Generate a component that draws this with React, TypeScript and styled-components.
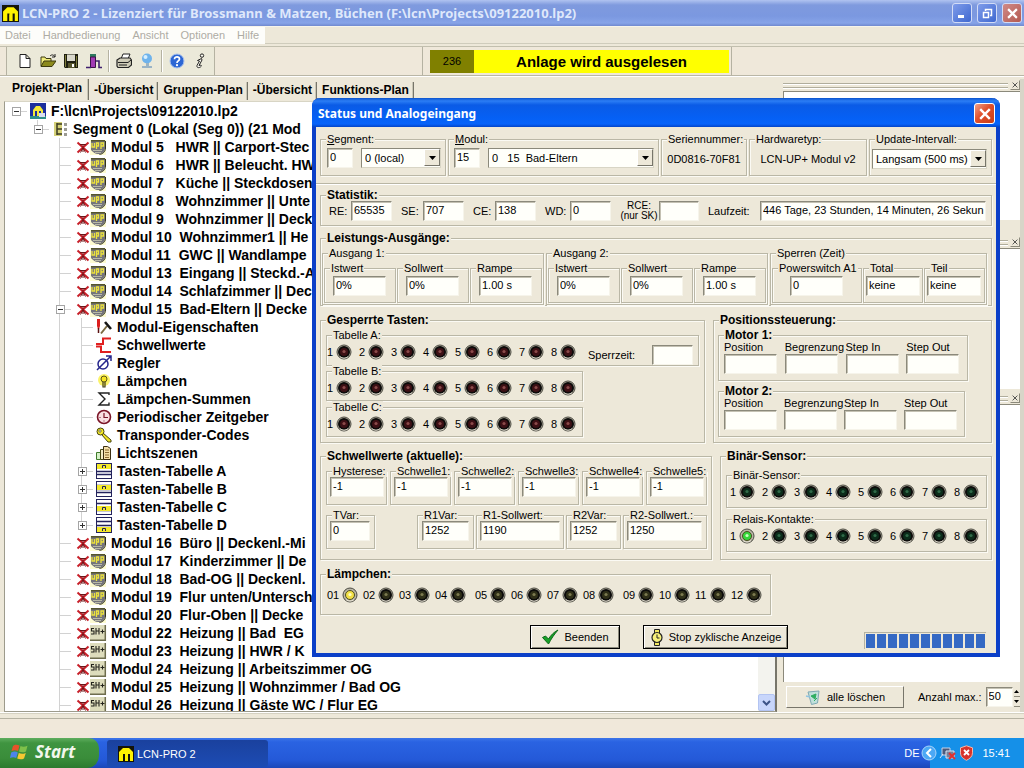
import React from "react";
import styled, { createGlobalStyle, css } from "styled-components";

const face = "#ede8d9";
const ui = '"Liberation Sans", Arial, sans-serif';
const caption = '"Noto Sans", "Open Sans", sans-serif';

const GlobalStyle = createGlobalStyle`
  *, *::before, *::after { box-sizing: border-box; }
  body { margin: 0; background: ${face}; color: #000; font: 11px/12px ${ui}; overflow: hidden; }
  button, input, select { font: inherit; color: inherit; margin: 0; }
  ul { list-style: none; margin: 0; padding: 0; }
  svg { display: block; flex: none; }
`;

const Desktop = styled.div`
  position: relative;
  display: flex;
  flex-direction: column;
  height: 100vh;
  min-height: 700px;
`;

/* ---------- main window frame ---------- */

const TitleBar = styled.header`
  display: flex;
  align-items: center;
  gap: 3px;
  height: 26px;
  padding: 0 2px;
  background: linear-gradient(#b0c3f0, #7f9ade 5px, #7b98e0 16px, #86a3e8 23px, #7089cf);
`;

const TitleText = styled.h1`
  flex: 1;
  margin: 0;
  color: #dfe8fb;
  font: bold 13px/18px ${caption};
  white-space: nowrap;
`;

const CaptionButton = styled.button<{ $danger?: boolean; $active?: boolean; $size?: number }>`
  display: grid;
  place-items: center;
  width: ${(p) => p.$size ?? 20}px;
  height: ${(p) => p.$size ?? 20}px;
  margin-left: 2px;
  padding: 0;
  border: 1px solid ${(p) => (p.$active ? "#fff" : "#d3dcf6")};
  border-radius: 3px;
  background: ${(p) =>
    p.$danger
      ? p.$active
        ? "linear-gradient(135deg, #f0a088, #e0502c 45%, #c83c14)"
        : "linear-gradient(135deg, #d08a88, #b45a50)"
      : "linear-gradient(135deg, #7f9cea, #3f68d0)"};
`;

const MenuBar = styled.nav`
  display: flex;
  height: 21px;
  border-top: 1px solid #f6f4ea;
  border-bottom: 1px solid #c2bfae;
  box-shadow: inset 0 -2px ${face}, inset 0 -3px #cfccbc;
`;

const MenuGroup = styled.div`
  display: flex;
  gap: 12px;
  height: 17px;
  padding: 0 6px 0 5px;
  background: #fdfdfa;
`;

const MenuItem = styled.button`
  padding: 0;
  border: 0;
  background: none;
  color: #aeaca4;
  line-height: 17px;
`;

const ToolRow = styled.div`
  display: flex;
  height: 29px;
  border-bottom: 1px solid #b9b6a6;
  background: #efe8da;
`;

const ToolBar = styled.div`
  display: flex;
  align-items: center;
  width: 209px;
  margin-left: 6px;
  padding-left: 6px;
  border-left: 1px solid #b5b2a2;
  border-right: 1px solid #b5b2a2;
  background: #ebe9d9;
`;

const ToolButton = styled.button`
  display: grid;
  place-items: center;
  width: 23px;
  height: 22px;
  padding: 0;
  border: 0;
  background: none;
`;

const ToolDivider = styled.span`
  width: 1px;
  height: 22px;
  margin: 0 3px;
  background: #b5b2a2;
  box-shadow: 1px 0 #fff;
`;

const Banner = styled.div`
  display: flex;
  margin-left: 207px;
  padding: 3px 2px 2px 7px;
  border-left: 1px solid #b5b2a2;
  border-right: 1px solid #b5b2a2;
`;

const BannerCount = styled.span`
  width: 44px;
  background: #808000;
  line-height: 23px;
  text-align: center;
`;

const BannerText = styled.strong`
  width: 255px;
  background: #ff0;
  font-size: 15px;
  line-height: 23px;
  text-align: center;
`;

const Workspace = styled.main`
  display: flex;
  flex: 1;
  min-height: 0;
  padding-top: 2px;
  border-top: 1px solid #fff;
`;

/* ---------- left column: tabs and tree ---------- */

const Explorer = styled.section`
  display: flex;
  flex: 1;
  flex-direction: column;
  min-width: 0;
  margin-left: 4px;
`;

const TabStrip = styled.div`
  display: flex;
  align-items: flex-end;
  height: 21px;
  padding-left: 2px;
`;

const Tab = styled.button<{ $selected?: boolean }>`
  height: ${(p) => (p.$selected ? 21 : 18)}px;
  padding: ${(p) => (p.$selected ? "0 6px 3px 6px" : "0 4px 1px 5px")};
  border: 0;
  border-right: 1px solid #77756a;
  box-shadow: inset -1px 0 #c9c6b6;
  background: none;
  font-weight: bold;
  font-size: 12px;
  line-height: 17px;
  white-space: nowrap;
`;

const TreePane = styled.div`
  display: flex;
  flex: 1;
  min-height: 0;
  margin-top: 1px;
  border: 1px solid #9d9b8c;
  border-top-color: #d8d5c5;
  border-right: 2px solid #77756a;
  background: #fff;
`;

const Tree = styled.ul`
  flex: 1;
  min-width: 0;
  overflow: hidden;
`;

const TreeRow = styled.li`
  display: flex;
  align-items: center;
  height: 18px;
  font-weight: bold;
  font-size: 14px;
  line-height: 18px;
  white-space: pre;
`;

const Gutter = styled.span<{ $line?: "full" | "half" | "none"; $tick?: boolean }>`
  display: grid;
  flex: none;
  place-items: center;
  width: 22px;
  height: 18px;
  background:
    ${(p) =>
      p.$line === "full"
        ? "linear-gradient(#d2d2d2, #d2d2d2) 10px 0 / 1px 18px no-repeat,"
        : p.$line === "half"
          ? "linear-gradient(#d2d2d2, #d2d2d2) 10px 0 / 1px 9px no-repeat,"
          : ""}
    ${(p) =>
      p.$tick
        ? "linear-gradient(#d2d2d2, #d2d2d2) 11px 9px / 11px 1px no-repeat,"
        : ""}
    transparent;
`;

const Toggle = styled.button`
  display: grid;
  place-items: center;
  width: 9px;
  height: 9px;
  padding: 0;
  border: 1px solid #a5a5a5;
  background: #fff;
`;

const IconCell = styled.span<{ $wide?: boolean }>`
  display: flex;
  flex: none;
  align-items: center;
  justify-content: center;
  width: ${(p) => (p.$wide ? 38 : 22)}px;
  margin-right: 2px;
  padding-left: ${(p) => (p.$wide ? 3 : 0)}px;
`;

const ScrollTrack = styled.div`
  display: flex;
  flex-direction: column;
  justify-content: flex-end;
  width: 17px;
  background: #f3f3ee;
`;

const ScrollButton = styled.button`
  display: grid;
  place-items: center;
  height: 17px;
  padding: 0;
  border: 1px solid #b3c4f2;
  border-radius: 2px;
  background: #c8d6fb;
`;

/* ---------- right column ---------- */

const SideColumn = styled.aside`
  display: flex;
  flex-direction: column;
  width: 241px;
  margin-left: 6px;
  border-right: 4px solid #d8d5c8;
`;

const Grip = styled.div<{ $mt?: number }>`
  display: flex;
  align-items: center;
  gap: 2px;
  height: 12px;
  margin-top: ${(p) => p.$mt ?? 0}px;
`;

const GripLines = styled.span`
  flex: 1;
  height: 5px;
  border-top: 1px solid #b0ad9c;
  border-bottom: 1px solid #b0ad9c;
  box-shadow: inset 0 1px #fff, 0 1px #fff;
`;

const GripClose = styled.button`
  display: grid;
  place-items: center;
  width: 10px;
  height: 10px;
  padding: 0;
  border: 1px solid;
  border-color: ${face} #8b897b #8b897b ${face};
  background: ${face};
`;

const SidePane = styled.div<{ $height?: number }>`
  ${(p) => (p.$height ? css`height: ${p.$height}px;` : css`flex: 1;`)}
  border-top: 1px solid #8b897b;
  border-left: 1px solid #8b897b;
  background: #fff;
`;

const SideFooter = styled.div`
  display: flex;
  align-items: center;
  height: 30px;
  padding-left: 3px;
  white-space: nowrap;
`;

const ClearButton = styled.button`
  display: flex;
  flex: none;
  align-items: center;
  justify-content: center;
  gap: 6px;
  width: 118px;
  height: 22px;
  margin-right: 14px;
  padding: 0;
  border: 1px solid;
  border-color: #fff #77756a #77756a #fff;
  background: ${face};
`;

const Spinner = styled.span`
  display: grid;
  width: 11px;
  margin-left: 1px;
`;

const SpinButton = styled.button`
  display: grid;
  place-items: center;
  height: 10px;
  padding: 0;
  border: 0;
  border-bottom: 1px solid #8b897b;
  background: ${face};
`;

/* ---------- bottom ---------- */

const StatusBar = styled.footer`
  height: 26px;
  border-top: 1px solid #fff;
  background: linear-gradient(#d5d2c2 1px, ${face} 1px 5px, #b5b2a2 5px 6px, #f0e8da 6px);
`;

const TaskBar = styled.nav`
  display: flex;
  height: 30px;
  background: linear-gradient(#3c74e8, #2a63e2 4px, #2459d8 22px, #1c47b8);
  color: #fff;
`;

const StartButton = styled.button`
  display: flex;
  align-items: center;
  gap: 5px;
  width: 99px;
  padding: 0 0 2px 10px;
  border: 0;
  border-radius: 0 10px 12px 0;
  background: linear-gradient(#5fae5f, #3f9440 5px, #3a8d3a 20px, #2c7a2e);
  color: #f2f7ec;
  font: italic bold 17px/22px ${caption};
`;

const TaskButton = styled.button`
  display: flex;
  align-items: center;
  gap: 3px;
  width: 161px;
  height: 27px;
  margin: 2px 0 0 8px;
  padding: 0 0 0 11px;
  border: 0;
  border-radius: 3px;
  background: linear-gradient(#1a419e, #1d4cb4);
`;

const Tray = styled.div`
  display: flex;
  align-items: center;
  gap: 2px;
  margin-left: auto;
  padding: 0 14px 0 11px;
  background: linear-gradient(90deg, transparent 37px, #1590e8 37px);
`;

const Clock = styled.time`
  margin-left: 6px;
`;

/* ---------- dialog ---------- */

const Dialog = styled.section`
  position: absolute;
  top: 98px;
  right: 24px;
  left: 312px;
  min-width: 688px;
  border: 4px solid #0b3fc8;
  border-top: 0;
  border-radius: 8px 8px 0 0;
  background: ${face};
`;

const DialogTitle = styled.header`
  display: flex;
  align-items: center;
  justify-content: space-between;
  height: 29px;
  margin: 0 -4px;
  padding: 2px 5px 0 6px;
  border-radius: 8px 8px 0 0;
  background: linear-gradient(#0a52cc, #2b7df5 3px, #0a5be6 7px, #0560f5 20px, #0763fa 26px, #0344c8);
`;

const DialogCaption = styled.h2`
  margin: 0;
  color: #fff;
  font: bold 12px/18px ${caption};
`;

const DialogBody = styled.form`
  display: flex;
  flex-direction: column;
  padding: 6px 4px 4px;
`;

const Bar = styled.div<{ $gap?: number; $mt?: number; $grow?: boolean }>`
  display: flex;
  flex: ${(p) => (p.$grow ? "1" : "none")};
  gap: ${(p) => p.$gap ?? 2}px;
  min-width: 0;
  margin-top: ${(p) => p.$mt ?? 0}px;
`;

const Rule = styled.hr`
  height: 2px;
  margin: 7px -4px 4px;
  border: 0;
  border-top: 1px solid #b9b6a4;
  background: #fff;
`;

type GroupProps = {
  $w?: number;
  $h: number;
  $mt?: number;
  $ml?: number;
  $pt?: number;
  $pr?: number;
  $pl?: number;
  $stack?: boolean;
};

const Group = styled.fieldset<GroupProps>`
  --inset: ${(p) => p.$pl ?? 0}px;
  display: flex;
  flex: ${(p) => (p.$w ? `0 0 ${p.$w}px` : "1 1 0")};
  ${(p) => p.$stack && css`flex: none; width: ${p.$w ? `${p.$w}px` : "auto"};`}
  height: ${(p) => p.$h}px;
  min-width: 0;
  margin: ${(p) => p.$mt ?? 0}px 0 0 ${(p) => p.$ml ?? 0}px;
  padding: ${(p) => p.$pt ?? 0}px ${(p) => p.$pr ?? 0}px 0 var(--inset);
  border: 1px solid #bab7a6;
  box-shadow: 1px 1px #fbfaf4, inset 1px 1px #fbfaf4;
`;

const Legend = styled.legend<{ $bold?: boolean }>`
  height: 12px;
  margin-left: calc(5px - var(--inset));
  padding: 0 1px;
  background: ${face};
  font-weight: ${(p) => (p.$bold ? "bold" : "normal")};
  font-size: ${(p) => (p.$bold ? 12 : 11)}px;
  line-height: 12px;
  white-space: nowrap;
`;

const TextBox = styled.input<{ $w?: number }>`
  ${(p) => (p.$w ? css`flex: none; width: ${p.$w}px;` : css`flex: 1; width: 0;`)}
  height: 20px;
  padding: 0 0 3px 2px;
  border: 1px solid;
  border-color: #8b897b #f6f4ea #f6f4ea #8b897b;
  box-shadow: inset 1px 1px #c4c1b3;
  border-radius: 0;
  background: #fffffa;
  outline: 0;
`;

const Combo = styled.span<{ $w?: number; $ml?: number }>`
  display: grid;
  ${(p) => (p.$w ? css`flex: none; width: ${p.$w}px;` : css`flex: 1;`)}
  height: 20px;
  margin-left: ${(p) => p.$ml ?? 0}px;
  border: 1px solid;
  border-color: #8b897b #d8d5c5 #d8d5c5 #8b897b;
  background: #fffffa;

  select, span { grid-area: 1 / 1; }
  select {
    appearance: none;
    width: 100%;
    height: 18px;
    padding: 0 16px 0 3px;
    border: 0;
    background: none;
    outline: 0;
  }
`;

const ComboArrow = styled.span`
  display: grid;
  place-items: center;
  justify-self: end;
  width: 16px;
  height: 17px;
  border: 1px solid;
  border-color: #fff #77756a #77756a #fff;
  background: ${face};
  pointer-events: none;
`;

const Field = styled.label<{ $gap?: number; $ml?: number; $grow?: boolean }>`
  display: flex;
  flex: ${(p) => (p.$grow ? "1" : "none")};
  align-items: center;
  gap: ${(p) => p.$gap ?? 4}px;
  min-width: 0;
  margin-left: ${(p) => p.$ml ?? 0}px;
`;

const FieldName = styled.span<{ $w: number; $small?: boolean }>`
  width: ${(p) => p.$w}px;
  ${(p) => p.$small && css`font-size: 10px; line-height: 10px; text-align: center; white-space: nowrap;`}
`;

const Readout = styled.output`
  flex: 1;
  line-height: 22px;
  text-align: center;
`;

const Stack = styled.div`
  flex: 1;
  min-width: 0;
`;

const LampRow = styled.div`
  display: flex;
`;

const LampCell = styled.span<{ $w: number; $label: number; $space?: boolean }>`
  display: grid;
  grid-template-columns: ${(p) => p.$label}px 16px;
  align-items: center;
  width: ${(p) => p.$w}px;
  height: 16px;
  margin-left: ${(p) => (p.$space ? 4 : 0)}px;
`;

const MotorGrid = styled.div`
  display: grid;
  flex: 1;
  grid-template-columns: repeat(4, 1fr);
  align-content: start;
`;

const MotorField = styled.label`
  display: flex;
  flex-direction: column;
  gap: 1px;
  white-space: nowrap;
`;

const ActionBar = styled.div`
  display: flex;
  align-items: flex-start;
  margin: 10px 6px 0 210px;
`;

const ActionButton = styled.button<{ $w: number }>`
  display: flex;
  align-items: center;
  justify-content: center;
  gap: 5px;
  width: ${(p) => p.$w}px;
  height: 24px;
  margin-right: 23px;
  padding: 0;
  border: 1px solid #000;
  box-shadow: inset 1px 1px #fff, inset -1px -1px #8b897b;
  background: ${face};
  white-space: nowrap;
`;

const Progress = styled.div`
  display: flex;
  gap: 2px;
  height: 17px;
  margin: 7px 0 0 auto;
  padding: 1px;
  border-top: 1px solid #b5b2a2;
  border-left: 1px solid #b5b2a2;
`;

const ProgressChunk = styled.span`
  width: 9px;
  background: #3569c4;
`;

/* ---------- drawings ---------- */

const lampColors = {
  red: ["#3d1015", "#8c4a4a"],
  green: ["#0b2c1a", "#2f6a48"],
  amber: ["#2f2f18", "#7c7a50"],
  greenOn: ["#35d63a", "#c9ffc0"],
  amberOn: ["#f2e045", "#fffbc0"],
};
type LampColor = keyof typeof lampColors;

const Lamp = ({ color }: { color: LampColor }) => {
  const [core, glint] = lampColors[color];
  const on = color.endsWith("On");
  return (
    <svg width="16" height="16" viewBox="0 0 16 16" aria-hidden="true">
      <circle cx="8" cy="8" r="7" fill="#b9b5a5" stroke="#4b4a42" />
      <circle cx="8" cy="8" r={on ? 4.5 : 5} fill={core} stroke={on ? "#4d4c22" : "#0c0b0a"} strokeWidth={on ? 1 : 2} />
      <circle cx="8" cy="7.5" r="1.6" fill={glint} />
      <path d="M4 12.6a6 6 0 0 0 8 0" fill="none" stroke="#f7f3e6" strokeWidth=".8" />
    </svg>
  );
};

const AppIcon = ({ size = 17 }: { size?: number }) => (
  <svg width={size} height={size} viewBox="0 0 16 16" aria-hidden="true">
    <rect width="16" height="16" fill="#14140a" />
    <path d="M1 15V6l4-4h6l4 4v9h-3V8h-2v7H7V8H5v7z" fill="#fff200" />
    <path d="M7 9h1v6H7z" fill="#fff200" />
  </svg>
);

const Cross = ({ size = 11, color = "#fff", width = 2 }: { size?: number; color?: string; width?: number }) => (
  <svg width={size} height={size} viewBox="0 0 10 10" aria-hidden="true">
    <path d="M1 1l8 8M9 1L1 9" stroke={color} strokeWidth={width} />
  </svg>
);

const DeadMark = () => (
  <svg width="14" height="16" viewBox="0 0 14 16" aria-hidden="true">
    <path d="M1.500 3.500l11 10M12.500 3.500l-11 10" stroke="#c8202a" strokeWidth="2" />
    <path d="M7 5v8M4 5.500h6M4.500 13.500L7 9l2.500 4.500" fill="none" stroke="#6e1518" />
  </svg>
);

const UppIcon = () => (
  <svg width="17" height="17" viewBox="0 0 17 17" aria-hidden="true">
    <path d="M0 1h16v15H0z" fill="#fdfbd0" />
    <path d="M1 1h14v8c0 4-3 6-7 6-3 0-5-2-7-4z" fill="#74747c" />
    <path d="M1 1h14v1.500H1z" fill="#55552c" />
    <path d="M2 4v4h2.500V4M6.500 10V4h2v3h-2M11 10V4h2.500v3H11" fill="none" stroke="#ece23c" strokeWidth="1.300" />
    <path d="M3 11.500h9M5 13.500h6" stroke="#b9b9a6" />
    <path d="M15.500 2v7c0 4-3 6-6 6.500" fill="none" stroke="#33331c" />
  </svg>
);

const ShIcon = () => (
  <svg width="17" height="17" viewBox="0 0 17 17" aria-hidden="true">
    <rect width="16" height="16" fill="#dddcbc" />
    <path d="M15.300 0v15.300H0" fill="none" stroke="#6e6d4e" strokeWidth="1.500" />
    <path d="M4 3.500H1.500V6H4v3H1M6 3v6.500M9 3v6.500M6 6h3M10.500 6.500h4M12.500 4.500v4" fill="none" stroke="#23231c" strokeWidth="1.100" />
  </svg>
);

const treeIcons: Record<string, React.ReactNode> = {
  project: (
    <>
      <rect width="16" height="16" fill="#1c2f9e" />
      <path d="M0 13h16v3H0z" fill="#2f8f8a" />
      <path d="M3 13V7l3-4h4l3 4v6h-2V8H9v5H7V8H5v5z" fill="#f4e93a" />
      <path d="M9 10h6v4H9z" fill="#d9dff0" />
    </>
  ),
  segment: (
    <>
      <path d="M2 1h8v14H2z" fill="#d6d27a" />
      <path d="M5 2v12M5 3h5M5 8h5M5 13h5" fill="none" stroke="#3b3b22" strokeWidth="1.500" />
      <path d="M12 2h3v3h-3zM12 7h3v3h-3zM12 12h3v3h-3z" fill="#9b9b92" />
    </>
  ),
  tools: (
    <>
      <path d="M1 0h3v7l-1 3H2L1 7z" fill="#dc1f1f" />
      <path d="M2.500 9v5" stroke="#5b1212" strokeWidth="1.500" />
      <path d="M5 14.500L11 7" stroke="#7a6a40" strokeWidth="2" />
      <path d="M9 3l6 7" stroke="#161616" strokeWidth="2.600" />
    </>
  ),
  threshold: <path d="M15 1.500H7V7H0M0 9.500h5V15h10" fill="none" stroke="#e02020" strokeWidth="2" />,
  control: (
    <>
      <circle cx="7" cy="9" r="5" fill="none" stroke="#26268c" strokeWidth="1.500" />
      <path d="M1 15L15 1M10 1h5v5" fill="none" stroke="#26268c" strokeWidth="1.500" />
    </>
  ),
  bulb: (
    <>
      <circle cx="8" cy="7" r="6" fill="#fbf36a" />
      <circle cx="8" cy="6" r="3" fill="#f7e420" stroke="#5a5416" />
      <path d="M7 9v5h2V9" fill="none" stroke="#3e3a12" strokeWidth="1.200" />
    </>
  ),
  sum: <path d="M13 4V2H3l6 6-6 6h10v-2.500" fill="none" stroke="#222" strokeWidth="1.400" />,
  clock: (
    <>
      <circle cx="8" cy="8" r="6.500" fill="#f9dfe2" stroke="#7a1426" strokeWidth="1.600" />
      <path d="M8 4v4.500h4" fill="none" stroke="#7a1426" strokeWidth="1.200" />
      <path d="M3.500 8.500h1M8 12.500v-1" stroke="#7a1426" />
    </>
  ),
  key: (
    <>
      <path d="M7 6l8 7v2h-3l-6-7" fill="#f0e224" stroke="#45420f" />
      <circle cx="4.500" cy="4.500" r="3.500" fill="#f6ea2c" stroke="#45420f" />
      <circle cx="4" cy="4" r="1.200" fill="#fff" stroke="#45420f" strokeWidth=".7" />
    </>
  ),
  scenes: (
    <>
      <path d="M.500 7.500h4v7h-4z" fill="#d6f0c8" stroke="#3e7a2a" />
      <path d="M4.500 4.500h5v10h-5z" fill="#f4ecc8" stroke="#4a4a16" />
      <path d="M7.500 1.500h4l3 2v11h-7z" fill="#f4dfa8" stroke="#3c2d10" />
      <path d="M9 5h4M9 7.500h4M9 10h4M9 12.500h4" stroke="#8a6a32" />
    </>
  ),
};

const TreeIcon = ({ name }: { name: string }) => {
  const band = { tabA: 0, tabB: 1, tabC: 2, tabD: 3 }[name];
  return (
    <svg width="16" height="16" viewBox="0 0 16 16" aria-hidden="true">
      {band === undefined ? (
        treeIcons[name]
      ) : (
        <>
          <rect x=".5" y=".5" width="15" height="15" fill="#fff" stroke="#23235c" />
          <path d="M1 4.500h14M1 8.500h14M1 11.500h14" stroke="#23235c" strokeWidth="1.400" />
          <rect x="1" y={1 + band * 3} width="14" height="5" fill="#f5ea2a" />
          <path d={`M6.500 ${5 + band * 3}v-2.500h3v2.500`} fill="none" stroke="#23235c" />
        </>
      )}
    </svg>
  );
};

const toolIcons: Record<string, React.ReactNode> = {
  Neu: <path d="M3 1.500h6l4 4v9H3zM9 1.500v4h4" fill="#fff" stroke="#222" />,
  Öffnen: (
    <>
      <path d="M1 13V4h4l1 1.500h5V8" fill="#f0ec7a" stroke="#3c3a10" />
      <path d="M1 13.500L4 8h12l-4 5.500z" fill="#8c8a1c" stroke="#3c3a10" />
      <path d="M10 3c2-2 4-1 5 1M15 1v3h-3" fill="none" stroke="#222" />
    </>
  ),
  Speichern: (
    <>
      <path d="M1 1h14v14H2l-1-1z" fill="#1e1e10" />
      <path d="M2 2h1v12H2zM13 3h1v11h-1z" fill="#7d7c3c" />
      <path d="M4 1.500h8V8H4z" fill="#d9d8cc" />
      <path d="M5 10h7v5H5z" fill="#55542c" />
      <path d="M9 11h2v3H9z" fill="#fff" />
    </>
  ),
  Beenden: (
    <>
      <path d="M4 1h6v3H4z" fill="#2f7a5e" />
      <path d="M4.500 4h5v10.500h-5z" fill="#a23ab4" stroke="#3a1246" />
      <path d="M0 14.500h5M10 8h3v6.500h3" fill="none" stroke="#3f1f6e" strokeWidth="1.600" />
    </>
  ),
  Drucken: (
    <>
      <path d="M5 6l2-5h7l-2 5" fill="#fff" stroke="#222" />
      <path d="M1 7l3-2h10l1.500 2v5l-3 2.500H2L1 13z" fill="#cfccb8" stroke="#222" strokeWidth="1.200" />
      <path d="M2 9.500h10M3 12h8M12 9.500L15 7" stroke="#222" />
    </>
  ),
  Netz: (
    <>
      <circle cx="8" cy="5.500" r="5" fill="#6fb3ec" />
      <circle cx="6.500" cy="4" r="2" fill="#d6efff" />
      <path d="M7 10h3v3H7zM3 13h10v2H3z" fill="#9ab4c6" />
    </>
  ),
  Hilfe: (
    <>
      <circle cx="8" cy="8" r="7" fill="#2c66d4" stroke="#a9c2ee" />
      <path d="M5.500 6.200C5.500 3 10.800 3.200 10.500 6.200 10.300 8 8 8 8 10" fill="none" stroke="#fff" strokeWidth="1.700" />
      <circle cx="8" cy="12.200" r="1.100" fill="#fff" />
    </>
  ),
  Info: (
    <>
      <path d="M9.500 5.500L5.500 7.500l2 .5L5 12.500c-.5 3 3 2.500 4.500.5L8.500 12l-1.500.5L10 7z" fill="#fbfaf0" stroke="#222" />
      <circle cx="10" cy="2.600" r="1.700" fill="#fbfaf0" stroke="#222" />
    </>
  ),
};

const ToolGlyph = ({ name }: { name: string }) => (
  <svg width="16" height="16" viewBox="0 0 16 16" aria-hidden="true">
    {toolIcons[name]}
  </svg>
);

const CheckIcon = () => (
  <svg width="18" height="16" viewBox="0 0 18 16" aria-hidden="true">
    <path d="M1.500 8.500L4.500 7l3 3C10 6 13 3 17 1 13.500 5 10 10 7.500 15z" fill="#18a028" stroke="#0c6a18" />
  </svg>
);

const WatchIcon = () => (
  <svg width="14" height="17" viewBox="0 0 14 17" aria-hidden="true">
    <path d="M4.500.5h5v4h-5zM4.500 12.500h5v4h-5z" fill="#f2e860" stroke="#222" />
    <circle cx="7" cy="8.500" r="5" fill="#f7f07a" stroke="#222" strokeWidth="1.200" />
    <path d="M7 5.500v3.500h2.500" fill="none" stroke="#222" />
  </svg>
);

const BinIcon = () => (
  <svg width="16" height="16" viewBox="0 0 16 16" aria-hidden="true">
    <path d="M3 3l11-1-1.500 12-6 1.500z" fill="#bfe0da" stroke="#7fa8b4" />
    <path d="M6 7l5-2-1 5zM9 12l3-3" fill="#2fae62" stroke="#2fae62" />
    <path d="M1 7l4 1" stroke="#8fc4e0" strokeWidth="1.500" />
  </svg>
);

const FlagIcon = () => (
  <svg width="20" height="18" viewBox="0 0 20 18" aria-hidden="true">
    <path d="M3 3c2-2 4-1.500 6.500-.5L8 8C6 7 4 7 1.500 8z" fill="#e8532a" />
    <path d="M10.500 3c2 1 4 1.200 7-.3L16 8.500c-2.500 1.200-4.500 1-7 0z" fill="#7fc04a" />
    <path d="M1.200 9.500C4 8 6 8.500 7.800 9.500L6.200 15C4 14 2.500 14 0 15z" fill="#4d84ea" />
    <path d="M8.800 10c2.200 1 4 1.200 7 0L14 15.500c-2.500 1.200-4.500 1-6.800 0z" fill="#f6c832" />
  </svg>
);

/* ---------- data ---------- */

type TreeNode = { text: string; kind: "upp" | "sh" | "child"; icon?: string; open?: boolean; expandable?: boolean };

const nodes: TreeNode[] = [
  { kind: "upp", text: "Modul 5   HWR || Carport-Stec" },
  { kind: "upp", text: "Modul 6   HWR || Beleucht. HW" },
  { kind: "upp", text: "Modul 7   Küche || Steckdosen" },
  { kind: "upp", text: "Modul 8   Wohnzimmer || Unte" },
  { kind: "upp", text: "Modul 9   Wohnzimmer || Deck" },
  { kind: "upp", text: "Modul 10  Wohnzimmer1 || He" },
  { kind: "upp", text: "Modul 11  GWC || Wandlampe" },
  { kind: "upp", text: "Modul 13  Eingang || Steckd.-A" },
  { kind: "upp", text: "Modul 14  Schlafzimmer || Dec" },
  { kind: "upp", text: "Modul 15  Bad-Eltern || Decke", open: true },
  { kind: "child", text: "Modul-Eigenschaften", icon: "tools" },
  { kind: "child", text: "Schwellwerte", icon: "threshold" },
  { kind: "child", text: "Regler", icon: "control" },
  { kind: "child", text: "Lämpchen", icon: "bulb" },
  { kind: "child", text: "Lämpchen-Summen", icon: "sum" },
  { kind: "child", text: "Periodischer Zeitgeber", icon: "clock" },
  { kind: "child", text: "Transponder-Codes", icon: "key" },
  { kind: "child", text: "Lichtszenen", icon: "scenes" },
  { kind: "child", text: "Tasten-Tabelle A", icon: "tabA", expandable: true },
  { kind: "child", text: "Tasten-Tabelle B", icon: "tabB", expandable: true },
  { kind: "child", text: "Tasten-Tabelle C", icon: "tabC", expandable: true },
  { kind: "child", text: "Tasten-Tabelle D", icon: "tabD", expandable: true },
  { kind: "upp", text: "Modul 16  Büro || Deckenl.-Mi" },
  { kind: "upp", text: "Modul 17  Kinderzimmer || De" },
  { kind: "upp", text: "Modul 18  Bad-OG || Deckenl." },
  { kind: "upp", text: "Modul 19  Flur unten/Untersch" },
  { kind: "upp", text: "Modul 20  Flur-Oben || Decke" },
  { kind: "sh", text: "Modul 22  Heizung || Bad  EG" },
  { kind: "sh", text: "Modul 23  Heizung || HWR / K" },
  { kind: "sh", text: "Modul 24  Heizung || Arbeitszimmer OG" },
  { kind: "sh", text: "Modul 25  Heizung || Wohnzimmer / Bad OG" },
  { kind: "sh", text: "Modul 26  Heizung || Gäste WC / Flur EG" },
];

const Expander = ({ open, name }: { open?: boolean; name: string }) => (
  <Toggle type="button" aria-label={name} aria-expanded={!!open}>
    <svg width="7" height="7" viewBox="0 0 7 7" aria-hidden="true">
      <path d={open ? "M1 3.500h5" : "M1 3.500h5M3.500 1v5"} stroke="#333" />
    </svg>
  </Toggle>
);

const NodeRow = ({ node }: { node: TreeNode }) => {
  const child = node.kind === "child";
  return (
    <TreeRow>
      <Gutter />
      <Gutter />
      <Gutter $line="full" $tick={!child}>
        {node.open && <Expander open name={node.text} />}
      </Gutter>
      {child && (
        <Gutter $line={node.icon === "tabD" ? "half" : "full"} $tick>
          {node.expandable && <Expander name={node.text} />}
        </Gutter>
      )}
      <IconCell $wide={!child}>
        {child ? (
          <TreeIcon name={node.icon!} />
        ) : (
          <>
            <DeadMark />
            {node.kind === "upp" ? <UppIcon /> : <ShIcon />}
          </>
        )}
      </IconCell>
      {node.text}
    </TreeRow>
  );
};

/* ---------- dialog parts ---------- */

const Lamps = ({ color, on = [] }: { color: "red" | "green"; on?: number[] }) => (
  <LampRow>
    {[1, 2, 3, 4, 5, 6, 7, 8].map((n) => (
      <LampCell key={n} $w={32} $label={9}>
        {n}
        <Lamp color={on.includes(n) ? "greenOn" : color} />
      </LampCell>
    ))}
  </LampRow>
);

type ValueBoxProps = { name: string; value: string; w: number; box?: number; h?: number; pt?: number; pl?: number; ml?: number };

const ValueBox = ({ name, value, w, box, h = 41, pt = 2, pl = 8, ml }: ValueBoxProps) => (
  <Group $w={box} $h={h} $pt={pt} $pl={pl} $ml={ml}>
    <Legend>{name}</Legend>
    <TextBox $w={w} defaultValue={value} aria-label={name} />
  </Group>
);

const Motor = ({ name, w, mt }: { name: string; w: number; mt?: number }) => (
  <Group $stack $w={w} $h={52} $mt={mt} $pl={5}>
    <Legend $bold>{name}</Legend>
    <MotorGrid>
      {["Position", "Begrenzung", "Step In", "Step Out"].map((f) => (
        <MotorField key={f}>
          {f}
          <TextBox $w={53} />
        </MotorField>
      ))}
    </MotorGrid>
  </Group>
);

const Arrow = () => (
  <ComboArrow>
    <svg width="7" height="4" viewBox="0 0 7 4" aria-hidden="true">
      <path d="M0 0h7L3.500 4z" />
    </svg>
  </ComboArrow>
);

const SideGrip = ({ mt }: { mt?: number }) => (
  <Grip $mt={mt}>
    <GripLines />
    <GripClose type="button" aria-label="Schließen">
      <Cross size={6} color="#444" width={1.5} />
    </GripClose>
  </Grip>
);

const StatusDialog = () => (
  <Dialog role="dialog" aria-labelledby="dialog-caption">
    <DialogTitle>
      <DialogCaption id="dialog-caption">Status und Analogeingang</DialogCaption>
      <CaptionButton type="button" $danger $active $size={21} aria-label="Schließen">
        <Cross size={12} />
      </CaptionButton>
    </DialogTitle>

    <DialogBody>
      <Bar>
        <Group $w={126} $h={43} $pt={3} $pl={6}>
          <Legend><u>S</u>egment:</Legend>
          <TextBox $w={26} defaultValue="0" aria-label="Segmentnummer" />
          <Combo $w={80} $ml={8}>
            <select aria-label="Segment"><option>0 (local)</option></select>
            <Arrow />
          </Combo>
        </Group>
        <Group $h={43} $pt={3} $pr={4} $pl={5}>
          <Legend><u>M</u>odul:</Legend>
          <TextBox $w={26} defaultValue="15" aria-label="Modulnummer" />
          <Combo $ml={8}>
            <select aria-label="Modul"><option>{"0\u00a0\u00a0\u00a015\u00a0\u00a0Bad-Eltern"}</option></select>
            <Arrow />
          </Combo>
        </Group>
        <Group $w={86} $h={43} $pt={3}>
          <Legend>Seriennummer:</Legend>
          <Readout>0D0816-70F81</Readout>
        </Group>
        <Group $w={118} $h={43} $pt={3}>
          <Legend>Hardwaretyp:</Legend>
          <Readout>LCN-UP+ Modul v2</Readout>
        </Group>
        <Group $w={123} $h={43} $pt={4} $pr={4} $pl={2}>
          <Legend>Update-Intervall:</Legend>
          <Combo>
            <select aria-label="Update-Intervall"><option>Langsam (500 ms)</option></select>
            <Arrow />
          </Combo>
        </Group>
      </Bar>

      <Rule />

      <Group $stack $h={37} $pr={5} $pl={8}>
        <Legend $bold>Statistik:</Legend>
        <Bar $gap={9} $grow>
          <Field><FieldName $w={18}>RE:</FieldName><TextBox $w={41} defaultValue="65535" /></Field>
          <Field><FieldName $w={18}>SE:</FieldName><TextBox $w={41} defaultValue="707" /></Field>
          <Field><FieldName $w={18}>CE:</FieldName><TextBox $w={41} defaultValue="138" /></Field>
          <Field><FieldName $w={21}>WD:</FieldName><TextBox $w={41} defaultValue="0" /></Field>
          <Field $gap={1}><FieldName $w={38} $small>RCE:<br />(nur SK)</FieldName><TextBox $w={40} /></Field>
          <Field $grow><FieldName $w={48}>Laufzeit:</FieldName><TextBox defaultValue="446 Tage, 23 Stunden, 14 Minuten, 26 Sekun" /></Field>
        </Bar>
      </Group>

      <Group $stack $h={74} $mt={6} $pt={3} $pr={4} $pl={1}>
        <Legend $bold>Leistungs-Ausgänge:</Legend>
        <Bar $grow>
          {["Ausgang 1:", "Ausgang 2:"].map((name) => (
            <Group key={name} $h={58} $pt={3} $pr={1} $pl={1}>
              <Legend>{name}</Legend>
              <Bar $gap={1} $grow>
                <ValueBox name="Istwert" value="0%" w={53} />
                <ValueBox name="Sollwert" value="0%" w={53} />
                <ValueBox name="Rampe" value="1.00 s" w={53} />
              </Bar>
            </Group>
          ))}
          <Group $w={217} $h={58} $pt={3} $pr={1} $pl={1}>
            <Legend>Sperren (Zeit)</Legend>
            <Bar $gap={1} $grow>
              <ValueBox name="Powerswitch A1" value="0" w={53} box={90} pl={17} />
              <ValueBox name="Total" value="keine" w={54} box={60} pl={2} />
              <ValueBox name="Teil" value="keine" w={54} pl={2} />
            </Bar>
          </Group>
        </Bar>
      </Group>

      <Bar $gap={8} $mt={8}>
        <Group $h={129} $pt={3} $pr={5} $pl={5}>
          <Legend $bold>Gesperrte Tasten:</Legend>
          <Stack>
            <Group $stack $h={37} $pt={3} $pr={5}>
              <Legend>Tabelle A:</Legend>
              <Lamps color="red" />
              <Field $ml={5}>
                <FieldName $w={60}>Sperrzeit:</FieldName>
                <TextBox $w={41} />
              </Field>
            </Group>
            <Group $stack $w={257} $h={36} $mt={-1} $pt={3}>
              <Legend>Tabelle B:</Legend>
              <Lamps color="red" />
            </Group>
            <Group $stack $w={257} $h={36} $pt={3}>
              <Legend>Tabelle C:</Legend>
              <Lamps color="red" />
            </Group>
          </Stack>
        </Group>
        <Group $w={279} $h={129} $pt={3} $pr={4} $pl={4}>
          <Legend $bold>Positionssteuerung:</Legend>
          <Stack>
            <Motor name="Motor 1:" w={250} />
            <Motor name="Motor 2:" w={247} mt={4} />
          </Stack>
        </Group>
      </Bar>

      <Bar $gap={8} $mt={7}>
        <Group $h={110} $pt={3} $pr={4} $pl={5}>
          <Legend $bold>Schwellwerte (aktuelle):</Legend>
          <Stack>
            <Bar $gap={3}>
              {["Hysterese:", "Schwelle1:", "Schwelle2:", "Schwelle3:", "Schwelle4:", "Schwelle5:"].map((name) => (
                <ValueBox key={name} name={name} value="-1" w={54} h={40} pt={0} pl={3} />
              ))}
            </Bar>
            <Bar $mt={4}>
              <ValueBox name="TVar:" value="0" w={40} box={49} h={40} pt={0} pl={3} />
              <ValueBox name="R1Var:" value="1252" w={47} box={57} h={40} pt={0} pl={4} ml={40} />
              <ValueBox name="R1-Sollwert:" value="1190" w={80} box={88} h={40} pt={0} pl={3} />
              <ValueBox name="R2Var:" value="1252" w={47} box={55} h={40} pt={0} pl={3} />
              <ValueBox name="R2-Sollwert.:" value="1250" w={75} h={40} pt={0} pl={3} />
            </Bar>
          </Stack>
        </Group>
        <Group $w={272} $h={110} $pt={7} $pr={4} $pl={5}>
          <Legend $bold>Binär-Sensor:</Legend>
          <Stack>
            <Group $stack $h={39} $pt={3} $pl={3}>
              <Legend>Binär-Sensor:</Legend>
              <Lamps color="green" />
            </Group>
            <Group $stack $h={39} $mt={5} $pt={3} $pl={3}>
              <Legend>Relais-Kontakte:</Legend>
              <Lamps color="green" on={[1]} />
            </Group>
          </Stack>
        </Group>
      </Bar>

      <Group $stack $w={451} $h={47} $mt={8} $pt={7} $pl={6}>
        <Legend $bold>Lämpchen:</Legend>
        <LampRow>
          {Array.from({ length: 12 }, (_, i) => i + 1).map((n) => (
            <LampCell key={n} $w={36} $label={15} $space={n === 5 || n === 9}>
              {String(n).padStart(2, "0")}
              <Lamp color={n === 1 ? "amberOn" : "amber"} />
            </LampCell>
          ))}
        </LampRow>
      </Group>

      <ActionBar>
        <ActionButton type="button" $w={90}><CheckIcon />Beenden</ActionButton>
        <ActionButton type="button" $w={145}><WatchIcon />Stop zyklische Anzeige</ActionButton>
        <Progress role="progressbar" aria-label="Abfrage">
          {Array.from({ length: 11 }, (_, i) => <ProgressChunk key={i} />)}
        </Progress>
      </ActionBar>
    </DialogBody>
  </Dialog>
);

export default function App() {
  return (
    <Desktop>
      <GlobalStyle />
      <TitleBar>
        <AppIcon />
        <TitleText>{"LCN-PRO 2 - Lizenziert für Brossmann & Matzen, Büchen (F:\\lcn\\Projects\\09122010.lp2)"}</TitleText>
        <CaptionButton type="button" aria-label="Minimieren">
          <svg width="11" height="11" viewBox="0 0 11 11"><path d="M1 8.500h6" stroke="#fff" strokeWidth="3" /></svg>
        </CaptionButton>
        <CaptionButton type="button" aria-label="Wiederherstellen">
          <svg width="11" height="11" viewBox="0 0 11 11"><path d="M3.500 3V1.500h6v6H8M1.500 4.500h5v5h-5z" fill="none" stroke="#fff" strokeWidth="1.500" /></svg>
        </CaptionButton>
        <CaptionButton type="button" $danger aria-label="Schließen"><Cross /></CaptionButton>
      </TitleBar>

      <MenuBar>
        <MenuGroup>
          {["Datei", "Handbedienung", "Ansicht", "Optionen", "Hilfe"].map((m) => <MenuItem key={m} type="button">{m}</MenuItem>)}
        </MenuGroup>
      </MenuBar>

      <ToolRow>
        <ToolBar>
          {["Neu", "Öffnen", "Speichern", "Beenden"].map((t) => <ToolButton key={t} type="button" aria-label={t}><ToolGlyph name={t} /></ToolButton>)}
          <ToolDivider />
          {["Drucken", "Netz"].map((t) => <ToolButton key={t} type="button" aria-label={t}><ToolGlyph name={t} /></ToolButton>)}
          <ToolDivider />
          {["Hilfe", "Info"].map((t) => <ToolButton key={t} type="button" aria-label={t}><ToolGlyph name={t} /></ToolButton>)}
        </ToolBar>
        <Banner>
          <BannerCount>236</BannerCount>
          <BannerText>Anlage wird ausgelesen</BannerText>
        </Banner>
      </ToolRow>

      <Workspace>
        <Explorer>
          <TabStrip>
            <Tab type="button" $selected>Projekt-Plan</Tab>
            <Tab type="button">-Übersicht</Tab>
            <Tab type="button">Gruppen-Plan</Tab>
            <Tab type="button">-Übersicht</Tab>
            <Tab type="button">Funktions-Plan</Tab>
          </TabStrip>
          <TreePane>
            <Tree>
              <TreeRow>
                <Gutter $tick><Expander open name="Projekt" /></Gutter>
                <IconCell><TreeIcon name="project" /></IconCell>
                {"F:\\lcn\\Projects\\09122010.lp2"}
              </TreeRow>
              <TreeRow>
                <Gutter />
                <Gutter $line="half" $tick><Expander open name="Segment 0" /></Gutter>
                <IconCell><TreeIcon name="segment" /></IconCell>
                Segment 0 (Lokal (Seg 0)) (21 Mod
              </TreeRow>
              {nodes.map((n) => <NodeRow key={n.text} node={n} />)}
            </Tree>
            <ScrollTrack>
              <ScrollButton type="button" aria-label="Nach unten">
                <svg width="9" height="6" viewBox="0 0 9 6"><path d="M1 1l3.500 3.500L8 1" fill="none" stroke="#3d5487" strokeWidth="2" /></svg>
              </ScrollButton>
            </ScrollTrack>
          </TreePane>
        </Explorer>
        <SideColumn>
          <SideGrip />
          <SidePane $height={129} />
          <SideGrip mt={16} />
          <SidePane $height={141} />
          <SideGrip mt={3} />
          <SidePane />
          <SideFooter>
            <ClearButton type="button"><BinIcon />alle löschen</ClearButton>
            <Field>
              Anzahl max.:
              <TextBox $w={27} defaultValue="50" />
            </Field>
            <Spinner>
              <SpinButton type="button" aria-label="Mehr"><svg width="5" height="3" viewBox="0 0 5 3"><path d="M0 3L2.500 0 5 3z" /></svg></SpinButton>
              <SpinButton type="button" aria-label="Weniger"><svg width="5" height="3" viewBox="0 0 5 3"><path d="M0 0h5L2.500 3z" /></svg></SpinButton>
            </Spinner>
          </SideFooter>
        </SideColumn>
      </Workspace>

      <StatusBar />

      <TaskBar>
        <StartButton type="button"><FlagIcon />Start</StartButton>
        <TaskButton type="button"><AppIcon size={16} />LCN-PRO 2</TaskButton>
        <Tray>
          <span>DE</span>
          <svg width="16" height="16" viewBox="0 0 16 16"><circle cx="8" cy="8" r="7" fill="#4ba8f5" stroke="#a8d4fa" /><path d="M10 4L6 8l4 4" fill="none" stroke="#fff" strokeWidth="2" /></svg>
          <svg width="18" height="16" viewBox="0 0 18 16"><path d="M3 3h8v7H3z" fill="#4a5a7c" stroke="#c5d2e8" /><path d="M1 13l3-4M7 6h8v7H7z" fill="#74819c" stroke="#dde4f0" /><path d="M10 8l6 6M16 8l-6 6" stroke="#e03030" strokeWidth="2" /></svg>
          <svg width="15" height="16" viewBox="0 0 15 16"><path d="M7.500.8l6 2v5c0 4-3 6-6 7.500-3-1.500-6-3.500-6-7.500v-5z" fill="#d8322a" stroke="#f4b8a8" /><path d="M5 5l5 5M10 5l-5 5" stroke="#fff" strokeWidth="1.800" /></svg>
          <Clock>15:41</Clock>
        </Tray>
      </TaskBar>

      <StatusDialog />
    </Desktop>
  );
}
